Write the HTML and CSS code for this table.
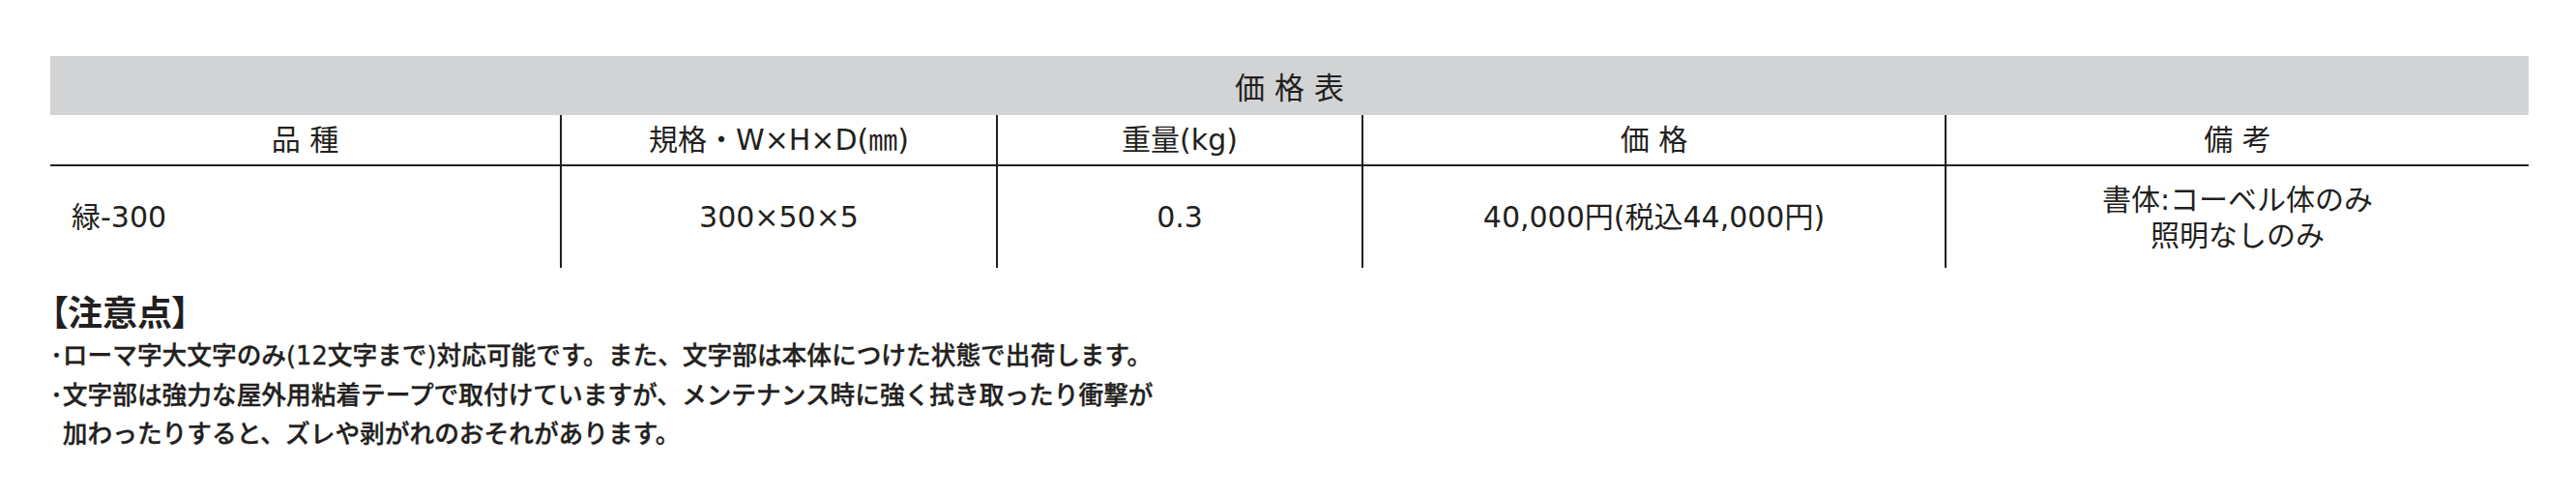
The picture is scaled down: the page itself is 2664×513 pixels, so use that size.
FILE: index.html
```html
<!DOCTYPE html>
<html lang="ja">
<head>
<meta charset="utf-8">
<title>価格表</title>
<link rel="stylesheet" href="styles.css">
</head>
<body>
<div class="page">
  <section class="price">
    <div class="band">価格表</div>
    <div class="grid">
      <div class="cell head">品 種</div>
      <div class="cell head sep">規格・W×H×D(㎜)</div>
      <div class="cell head sep">重量(kg)</div>
      <div class="cell head sep">価 格</div>
      <div class="cell head sep">備 考</div>
      <div class="cell body first">緑-300</div>
      <div class="cell body sep">300×50×5</div>
      <div class="cell body sep">0.3</div>
      <div class="cell body sep">40,000円(税込44,000円)</div>
      <div class="cell body sep remarks">書体:コーベル体のみ<br>照明なしのみ</div>
    </div>
  </section>
  <section class="notes">
    <h2 class="notes-title">【注意点】</h2>
    <ul class="notes-list">
      <li>･ローマ字大文字のみ(12文字まで)対応可能です。また、文字部は本体につけた状態で出荷します。</li>
      <li>･文字部は強力な屋外用粘着テープで取付けていますが、メンテナンス時に強く拭き取ったり衝撃が<br>加わったりすると、ズレや剥がれのおそれがあります。</li>
    </ul>
  </section>
</div>
</body>
</html>
```

FILE: styles.css
```css
* {
  box-sizing: border-box;
}

html, body {
  margin: 0;
  padding: 0;
  background: #ffffff;
}

body {
  color: #231f20;
  font-family: "DejaVu Sans", "Noto Sans CJK JP", sans-serif;
}

.page {
  padding: 58px 0 0 52px;
}

.price {
  width: 2563px;
}

.band {
  height: 61px;
  background: #d1d3d4;
  display: flex;
  align-items: center;
  justify-content: center;
  font-family: "Noto Sans CJK JP", sans-serif;
  font-size: 31px;
  letter-spacing: 10px;
  padding-left: 10px;
  line-height: 1;
}

.grid {
  display: grid;
  grid-template-columns: 527px 451px 378px 603px 604px;
  grid-template-rows: 53px 105px;
}

.cell {
  display: flex;
  align-items: center;
  justify-content: center;
  text-align: center;
  font-size: 30px;
  line-height: 37px;
  white-space: nowrap;
}

.head {
  border-bottom: 2px solid #231f20;
}

.sep {
  border-left: 2px solid #231f20;
}

.first {
  justify-content: flex-start;
  padding-left: 22px;
}

.notes {
  margin-top: 22px;
}

.notes-title {
  margin: 0;
  font-family: "Noto Sans CJK JP", sans-serif;
  font-size: 36px;
  font-weight: 700;
  line-height: 44px;
  font-feature-settings: "palt";
}

.notes-list {
  list-style: none;
  margin: 5px 0 0;
  padding: 0;
  font-size: 25.7px;
  line-height: 40.5px;
  font-weight: 500;
  white-space: nowrap;
  -webkit-text-stroke: 0.35px #231f20;
}

.notes-list li {
  padding-left: 0.5em;
  text-indent: -0.5em;
}
```
